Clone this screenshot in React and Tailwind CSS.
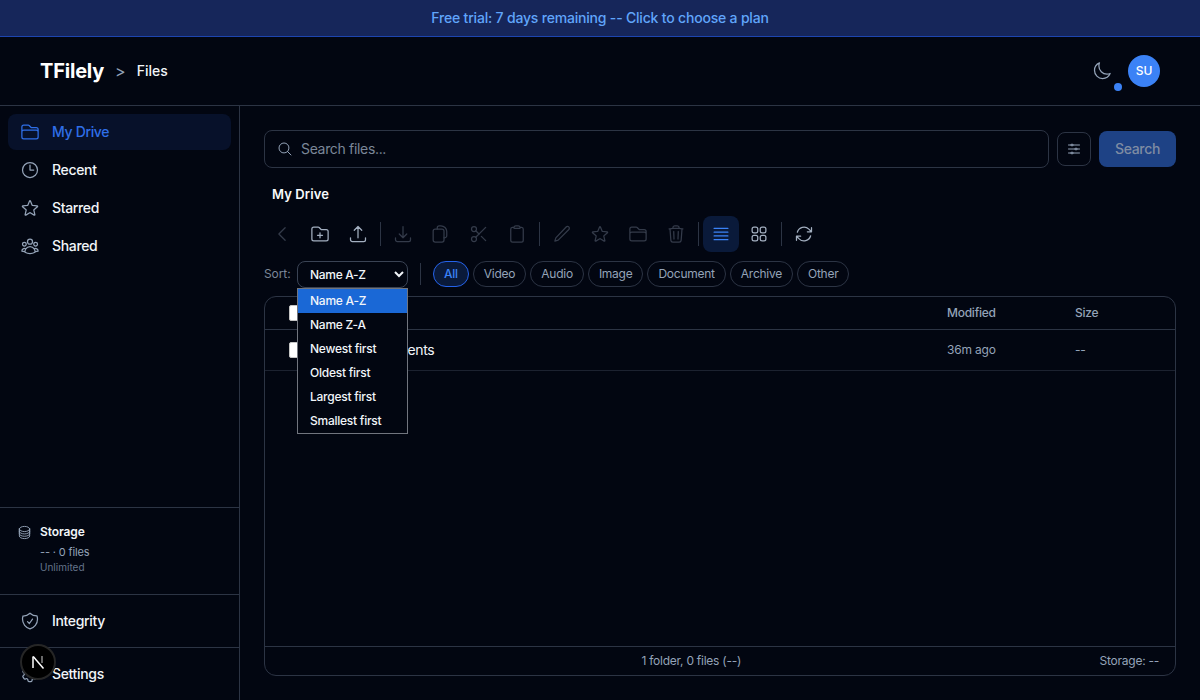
import { Scissors } from 'lucide-react';
import {
  HiOutlineFolder, HiOutlineClock, HiOutlineStar, HiOutlineUserGroup, HiOutlineMagnifyingGlass,
  HiOutlineAdjustmentsHorizontal, HiOutlineChevronLeft, HiOutlineFolderPlus, HiOutlineArrowUpTray,
  HiOutlineArrowDownTray, HiOutlineClipboard,
  HiOutlineTrash, HiOutlineBars4, HiOutlineSquares2X2, HiOutlineArrowPath,
  HiOutlineMoon, HiOutlineCircleStack, HiOutlineShieldCheck, HiOutlineCog6Tooth,
} from 'react-icons/hi2';

const navItems = [
  { label: 'My Drive', icon: HiOutlineFolder, active: true },
  { label: 'Recent', icon: HiOutlineClock },
  { label: 'Starred', icon: HiOutlineStar },
  { label: 'Shared', icon: HiOutlineUserGroup },
];

const filters = ['All', 'Video', 'Audio', 'Image', 'Document', 'Archive', 'Other'];
const sortOptions = ['Name A-Z', 'Name Z-A', 'Newest first', 'Oldest first', 'Largest first', 'Smallest first'];

const ScissorsIcon = props => <Scissors strokeWidth={1.5} {...props} />;

function PencilIcon(props) {
  return (
    <svg viewBox="0 0 24 24" fill="none" stroke="currentColor" strokeWidth="1.5" strokeLinejoin="round" {...props}>
      <path d="M17 3.6a2.1 2.1 0 0 1 3.2 3L7.4 19.4 3.4 20.6l1.2-4L17 3.6z" />
    </svg>
  );
}

function CopyIcon(props) {
  return (
    <svg viewBox="0 0 24 24" fill="none" stroke="currentColor" strokeWidth="1.5" strokeLinecap="round" {...props}>
      <rect x="2.6" y="6" width="13" height="15.6" rx="2.4" />
      <path d="M7.5 6V4.5a2.4 2.4 0 0 1 2.4-2.4h2a7 7 0 0 1 7 7v5a2.4 2.4 0 0 1-2.4 2.4h-1" />
    </svg>
  );
}

function NextLogo() {
  return (
    <svg viewBox="0 0 14 14" className="h-[14px] w-[14px]" fill="none" stroke="white" strokeWidth="1.5">
      <path d="M2 13V1.5" />
      <path d="M2.2 1.5L12.5 13.5" />
      <path d="M11 1v7" strokeOpacity="0.55" />
    </svg>
  );
}

function NavLink({ label, icon: Icon, active }) {
  return (
    <div className={`flex h-9 items-center gap-3 rounded-lg px-3 text-sm font-medium tracking-[-0.34px] ${active ? 'bg-[#07112a] text-[#2f6fe8]' : 'text-[#f1f5f9]'}`}>
      <Icon className={`h-5 w-5 shrink-0 ${active ? 'text-[#2f6fe8]' : 'text-[#94a3b8]'}`} />
      <span>{label}</span>
    </div>
  );
}

function ToolButton({ icon: Icon, enabled, active }) {
  const color = active ? 'bg-[#0a1a3a] text-[#3b82f6]' : enabled ? 'text-[#a3afc0]' : 'text-[#343b4a]';
  return (
    <div className={`flex h-9 w-9 items-center justify-center rounded-lg ${color}`}>
      <Icon className="h-5 w-5" />
    </div>
  );
}

function Divider() {
  return <div className="mx-[2px] h-6 w-px bg-[#2c3444]" />;
}

export default function App() {
  return (
    <div className="flex h-[700px] w-[1200px] flex-col overflow-hidden bg-[#020611] font-['Inter',sans-serif] text-white">
      {/* Trial banner */}
      <div className="flex h-[37px] shrink-0 items-center justify-center border-b border-[#1d45b0] bg-[#16265a] text-sm font-medium tracking-[-0.19px] text-[#60a5fa]">
        Free trial: 7 days remaining -- Click to choose a plan
      </div>

      {/* Header */}
      <header className="flex h-[69px] shrink-0 items-center justify-between border-b border-[#2c3444] px-10">
        <div className="flex items-center">
          <span className="text-[20px] font-bold tracking-[-0.2px] text-white">TFilely</span>
          <span className="ml-[11px] text-base text-[#94a3b8]">&gt;</span>
          <span className="ml-[11px] text-sm font-medium text-[#f1f5f9]">Files</span>
        </div>
        <div className="flex items-center gap-[10px]">
          <div className="relative flex h-8 w-8 items-center justify-center text-[#94a3b8]">
            <HiOutlineMoon className="h-5 w-5" />
            <span className="absolute -bottom-1 -right-1 h-2 w-2 rounded-full bg-[#3b82f6]" />
          </div>
          <div className="flex h-8 w-8 items-center justify-center rounded-full bg-[#3b82f6] text-xs font-medium text-white">SU</div>
        </div>
      </header>

      <div className="flex min-h-0 flex-1">
        {/* Sidebar */}
        <aside className="relative flex w-[240px] shrink-0 flex-col border-r border-[#2c3444]">
          <nav className="flex flex-1 flex-col gap-[2px] px-2 pt-2">
            {navItems.map(item => <NavLink key={item.label} {...item} />)}
          </nav>
          <div className="flex h-[87px] gap-2 border-t border-[#2c3444] pl-[17px] pt-4">
            <HiOutlineCircleStack className="mt-[1px] h-[15px] w-[15px] text-[#94a3b8]" />
            <div>
              <div className="text-xs font-semibold leading-4 tracking-[-0.1px] text-[#f1f5f9]">Storage</div>
              <div className="mt-[4px] text-[11px] leading-4 tracking-[-0.15px] text-[#94a3b8]">-- · 0 files</div>
              <div className="text-[10px] leading-[14px] text-[#64748b]">Unlimited</div>
            </div>
          </div>
          <div className="flex h-[53px] items-center border-t border-[#2c3444] px-2">
            <div className="flex-1"><NavLink label="Integrity" icon={HiOutlineShieldCheck} /></div>
          </div>
          <div className="flex h-[53px] items-center border-t border-[#2c3444] px-2">
            <div className="flex-1"><NavLink label="Settings" icon={HiOutlineCog6Tooth} /></div>
          </div>
          {/* Dev badge */}
          <div className="absolute bottom-5 left-5 flex h-9 w-9 items-center justify-center rounded-full border-2 border-[#262626] bg-black">
            <NextLogo />
          </div>
        </aside>

        {/* Main */}
        <main className="flex min-w-0 flex-1 flex-col px-6 pb-6 pt-6">
          <div className="flex items-center gap-2">
            <div className="flex h-[38px] flex-1 items-center gap-2 rounded-lg border border-[#2c3444] pl-3">
              <HiOutlineMagnifyingGlass className="h-4 w-4 text-[#94a3b8]" />
              <span className="text-sm tracking-[-0.33px] text-[#7b8698]">Search files...</span>
            </div>
            <div className="flex h-[34px] w-[34px] items-center justify-center rounded-lg border border-[#2c3444] text-[#94a3b8]">
              <HiOutlineAdjustmentsHorizontal className="h-4 w-4" />
            </div>
            <div className="flex h-9 w-[77px] items-center justify-center rounded-lg bg-[#1e4285] text-sm font-medium tracking-[-0.3px] text-[#7f8ca3]">Search</div>
          </div>

          <div className="mt-4 pl-2 text-[13px] font-semibold leading-5 tracking-[0.1px] text-[#f8fafc]">My Drive</div>

          {/* Toolbar */}
          <div className="mt-[12px] flex items-center gap-[2px]">
            <ToolButton icon={HiOutlineChevronLeft} />
            <ToolButton icon={HiOutlineFolderPlus} enabled />
            <ToolButton icon={HiOutlineArrowUpTray} enabled />
            <Divider />
            <ToolButton icon={HiOutlineArrowDownTray} />
            <ToolButton icon={CopyIcon} />
            <ToolButton icon={ScissorsIcon} />
            <ToolButton icon={HiOutlineClipboard} />
            <Divider />
            <ToolButton icon={PencilIcon} />
            <ToolButton icon={HiOutlineStar} />
            <ToolButton icon={HiOutlineFolder} />
            <ToolButton icon={HiOutlineTrash} />
            <Divider />
            <ToolButton icon={HiOutlineBars4} active />
            <ToolButton icon={HiOutlineSquares2X2} enabled />
            <Divider />
            <ToolButton icon={HiOutlineArrowPath} enabled />
          </div>

          {/* Sort and filters */}
          <div className="relative mt-[8px] flex h-7 items-center">
            <span className="mr-[6px] w-[27px] text-xs tracking-[-0.1px] text-[#7b8698]">Sort:</span>
            <select className="h-[27px] w-[111px] rounded-lg border border-[#3a4354] bg-[#020611] pl-2 text-xs font-medium tracking-[-0.3px] text-[#f1f5f9]">
              <option>Name A-Z</option>
            </select>
            <div className="mx-3 h-[22px] w-px bg-[#2c3444]" />
            <div className="flex items-center gap-1">
              {filters.map(f => (
                <span
                  key={f}
                  className={`flex h-[26px] items-center rounded-full border px-[10px] text-xs tracking-[-0.25px] ${f === 'All' ? 'border-[#2563eb] bg-[#0a1a3a] font-medium text-[#3b82f6]' : 'border-[#2c3444] text-[#94a3b8]'}`}
                >
                  {f}
                </span>
              ))}
            </div>

            {/* Open sort menu */}
            <div className="absolute left-[33px] top-[28px] z-10 w-[111px] border border-[#71757e] bg-[#020611] text-xs font-medium tracking-[-0.25px] text-[#f1f5f9]">
              {sortOptions.map((opt, i) => (
                <div key={opt} className={`flex h-6 items-center pl-3 ${i === 0 ? 'bg-[#1a68d6]' : ''}`}>{opt}</div>
              ))}
            </div>
          </div>

          {/* File table */}
          <div className="mt-[8px] flex min-h-0 flex-1 flex-col rounded-xl border border-[#2c3444]">
            <div className="grid h-[33px] shrink-0 grid-cols-[1fr_128px_100px] items-center border-b border-[#2c3444] pl-6 text-xs font-medium tracking-[-0.25px] text-[#94a3b8]">
              <div className="flex items-center">
                <span className="h-4 w-4 rounded-[2px] border border-[#c4c4c4] bg-white" />
              </div>
              <div>Modified</div>
              <div>Size</div>
            </div>
            <div className="grid h-[41px] shrink-0 grid-cols-[1fr_128px_100px] items-center border-b border-[#1c2230] pl-6 text-xs tracking-[-0.2px] text-[#94a3b8]">
              <div className="flex items-center">
                <span className="h-4 w-4 rounded-[2px] border border-[#c4c4c4] bg-white" />
                <span className="ml-[57px] text-sm tracking-[-0.33px] text-[#f1f5f9]">Documents</span>
              </div>
              <div>36m ago</div>
              <div>--</div>
            </div>
            <div className="flex-1" />
            <div className="flex h-[29px] shrink-0 items-center border-t border-[#2c3444] pl-[18px] pr-4 text-xs tracking-[-0.25px] text-[#94a3b8]">
              <span className="flex-1 text-center">1 folder, 0 files (--)</span>
              <span>Storage: --</span>
            </div>
          </div>
        </main>
      </div>
    </div>
  );
}
